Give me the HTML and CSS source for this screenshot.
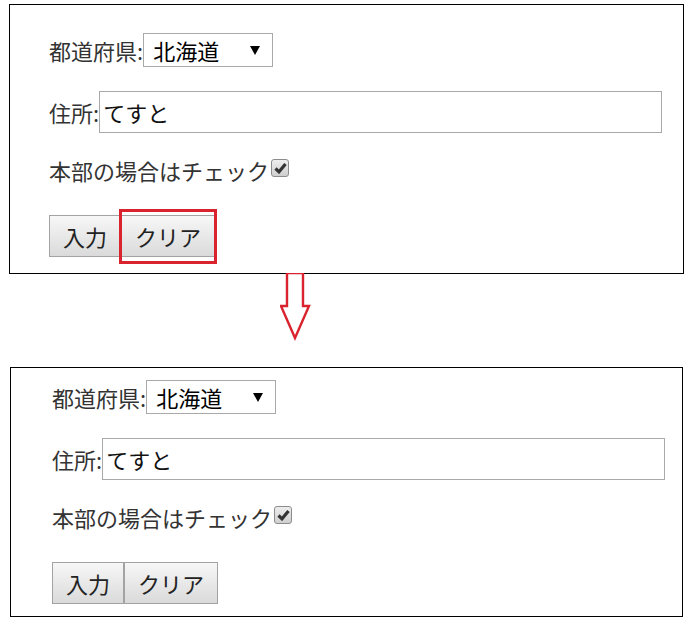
FILE: index.html
```html
<!DOCTYPE html>
<html lang="ja">
<head>
    <meta charset="UTF-8">
    <title>入力フォーム クリア前後</title>
    <link rel="stylesheet" href="styles.css">
</head>
<body>
    <!-- before -->
    <div class="panel panel-before">
        <div class="row">
            <label for="pref1">都道府県:</label>
            <span class="select-wrap">
                <select id="pref1"><option>北海道</option></select>
            </span>
        </div>
        <div class="row">
            <label for="addr1">住所:</label>
            <input type="text" id="addr1" value="てすと">
        </div>
        <div class="row check-row">
            <span>本部の場合はチェック</span>
            <span class="checkbox">
                <svg width="13" height="12" viewBox="0 0 13 12"><path d="M1.5 6.5 L5 9.8 L11.5 2" fill="none" stroke="#333" stroke-width="3.2"/></svg>
            </span>
        </div>
        <div class="row buttons">
            <button>入力</button>
            <span class="mark-wrap">
                <button>クリア</button>
                <span class="mark"></span>
            </span>
        </div>
    </div>

    <div class="arrow">
        <svg width="32" height="68" viewBox="0 0 32 68">
            <polygon points="7,0 23,0 23,33 29,33 15,65 1,33 7,33" fill="#fff" stroke="#d9232e" stroke-width="2.4"/>
        </svg>
    </div>

    <!-- after -->
    <div class="panel panel-after">
        <div class="row">
            <label for="pref2">都道府県:</label>
            <span class="select-wrap">
                <select id="pref2"><option>北海道</option></select>
            </span>
        </div>
        <div class="row">
            <label for="addr2">住所:</label>
            <input type="text" id="addr2" value="てすと">
        </div>
        <div class="row check-row">
            <span>本部の場合はチェック</span>
            <span class="checkbox">
                <svg width="13" height="12" viewBox="0 0 13 12"><path d="M1.5 6.5 L5 9.8 L11.5 2" fill="none" stroke="#333" stroke-width="3.2"/></svg>
            </span>
        </div>
        <div class="row buttons">
            <button>入力</button>
            <button>クリア</button>
        </div>
    </div>
</body>
</html>
```

FILE: styles.css
```css
body {
    margin: 0;
    font-family: "Noto Sans CJK JP", "Noto Sans", sans-serif;
    font-size: 22px;
    color: #333;
    background: #fff;
}
.panel {
    box-sizing: border-box;
    border: 1px solid #000;
    display: flex;
    flex-direction: column;
    gap: 24px;
}
.panel-before {
    width: 675px;
    height: 270px;
    margin: 4px 0 0 9px;
    padding: 28px 0 0 39px;
}
.panel-after {
    width: 673px;
    height: 250px;
    margin: 0 0 0 10px;
    padding: 12px 0 0 41px;
}
.row {
    display: flex;
    align-items: center;
    line-height: 1;
}
.row label {
    white-space: nowrap;
}
.select-wrap {
    position: relative;
    display: inline-block;
}
.select-wrap::after {
    content: "";
    position: absolute;
    right: 13px;
    top: 13px;
    border-left: 5px solid transparent;
    border-right: 5px solid transparent;
    border-top: 9px solid #000;
    pointer-events: none;
}
select {
    -webkit-appearance: none;
    appearance: none;
    box-sizing: border-box;
    width: 130px;
    height: 34px;
    padding: 0 0 0 9px;
    border: 1px solid #a9a9a9;
    border-radius: 0;
    background: #fff;
    font-family: inherit;
    font-size: 22px;
    color: #000;
}
input[type="text"] {
    box-sizing: border-box;
    width: 563px;
    height: 42px;
    padding: 0 3px;
    border: 1px solid #a9a9a9;
    font-family: inherit;
    font-size: 22px;
    color: #111;
    outline: none;
}
.check-row {
    height: 34px;
    align-items: flex-start;
    padding-top: 2px;
    box-sizing: border-box;
}
.checkbox {
    box-sizing: border-box;
    flex: none;
    width: 18px;
    height: 18px;
    margin-left: 2px;
    border: 1px solid #8c8c8c;
    border-radius: 3px;
    background: linear-gradient(#ededed, #cfcfcf);
    display: flex;
    align-items: center;
    justify-content: center;
}
.checkbox svg {
    display: block;
}
.buttons {
    gap: 0;
}
button {
    box-sizing: border-box;
    height: 42px;
    padding: 0 13px;
    border: 1px solid #a3a3a3;
    border-radius: 0;
    background: linear-gradient(#f7f7f7, #dadada);
    font-family: inherit;
    font-size: 22px;
    color: #222;
    cursor: pointer;
}
.mark-wrap {
    position: relative;
    display: inline-flex;
}
.mark {
    position: absolute;
    left: -2px;
    right: -2px;
    top: -6px;
    bottom: -7px;
    border: 3px solid #d9232e;
    pointer-events: none;
}
.arrow {
    height: 94px;
    padding-left: 280px;
}
.arrow svg {
    display: block;
    margin-top: -1px;
}
```
